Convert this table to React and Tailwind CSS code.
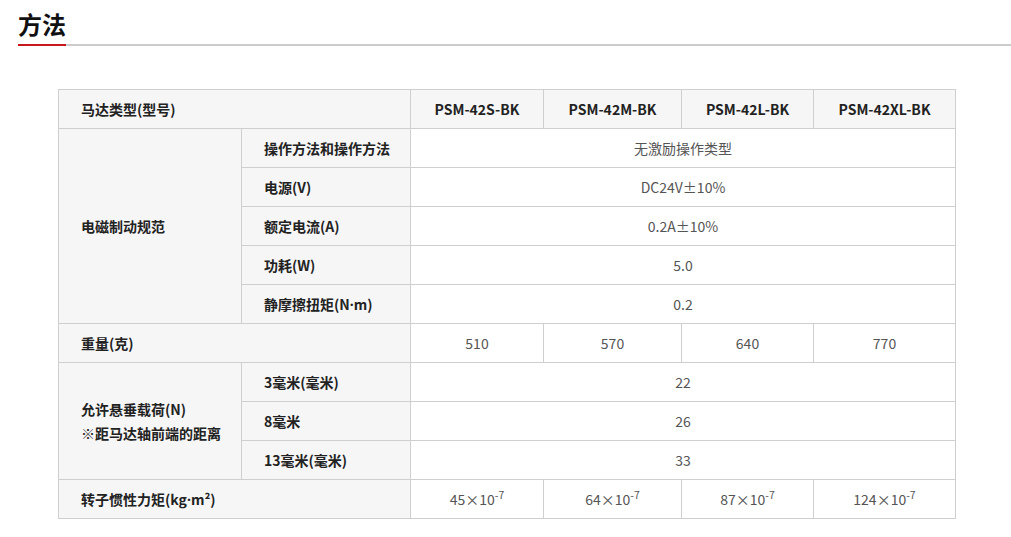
import React from "react";

const models = ["PSM-42S-BK", "PSM-42M-BK", "PSM-42L-BK", "PSM-42XL-BK"];

const dot = <span className="font-['Noto_Sans',sans-serif]">·</span>;

const brakeRows = [
    ["操作方法和操作方法", "无激励操作类型"],
    ["电源(V)", "DC24V±10%"],
    ["额定电流(A)", "0.2A±10%"],
    ["功耗(W)", "5.0"],
    [<>静摩擦扭矩(N{dot}m)</>, "0.2"],
];

const loadRows = [
    ["3毫米(毫米)", "22"],
    ["8毫米", "26"],
    ["13毫米(毫米)", "33"],
];

const weights = ["510", "570", "640", "770"];
const inertia = ["45", "64", "87", "124"];

const th = "border border-[#cfcfcf] bg-[#f6f6f6] font-bold text-[#222] text-left pl-[22px]";
const td = "border border-[#cfcfcf] bg-white text-center text-[#555] font-normal";

const App = () => {
    return (
        <div className="min-h-screen bg-white" style={{ fontFamily: '"Noto Sans CJK SC", "Noto Sans", sans-serif' }}>
            <div className="ml-[18px] flex border-b-2 border-[#cccccc]">
                <h2 className="-mb-[2px] border-b-2 border-[#c9171e] pt-[6px] pb-[2px] text-[24px] leading-[36px] font-bold text-[#111]">方法</h2>
            </div>

            <table className="mt-[43px] ml-[58px] w-[897px] border-collapse table-fixed text-[14px]">
                <colgroup>
                    <col className="w-[183px]" />
                    <col className="w-[169px]" />
                    <col className="w-[133px]" />
                    <col className="w-[138px]" />
                    <col className="w-[132px]" />
                    <col className="w-[142px]" />
                </colgroup>
                <tbody>
                    <tr className="h-[39px]">
                        <th colSpan={2} className={th}>马达类型(型号)</th>
                        {models.map((m) => (
                            <th key={m} className="border border-[#cfcfcf] bg-[#f6f6f6] font-bold text-[#222] text-center">{m}</th>
                        ))}
                    </tr>

                    {brakeRows.map((r, i) => (
                        <tr key={i} className="h-[39px]">
                            {i === 0 && (
                                <th rowSpan={5} className={th}>电磁制动规范</th>
                            )}
                            <th className={th}>{r[0]}</th>
                            <td colSpan={4} className={td}>{r[1]}</td>
                        </tr>
                    ))}

                    <tr className="h-[39px]">
                        <th colSpan={2} className={th}>重量(克)</th>
                        {weights.map((w) => (
                            <td key={w} className={td}>{w}</td>
                        ))}
                    </tr>

                    {loadRows.map((r, i) => (
                        <tr key={r[0]} className="h-[39px]">
                            {i === 0 && (
                                <th rowSpan={3} className={th + " leading-[24px]"}>
                                    允许悬垂载荷(N)
                                    <br />
                                    ※距马达轴前端的距离
                                </th>
                            )}
                            <th className={th}>{r[0]}</th>
                            <td colSpan={4} className={td}>{r[1]}</td>
                        </tr>
                    ))}

                    <tr className="h-[39px]">
                        <th colSpan={2} className={th}>
                            转子惯性力矩(kg{dot}m²)
                        </th>
                        {inertia.map((v) => (
                            <td key={v} className={td}>
                                {v}×10<sup>-7</sup>
                            </td>
                        ))}
                    </tr>
                </tbody>
            </table>
        </div>
    );
};

export default App;
